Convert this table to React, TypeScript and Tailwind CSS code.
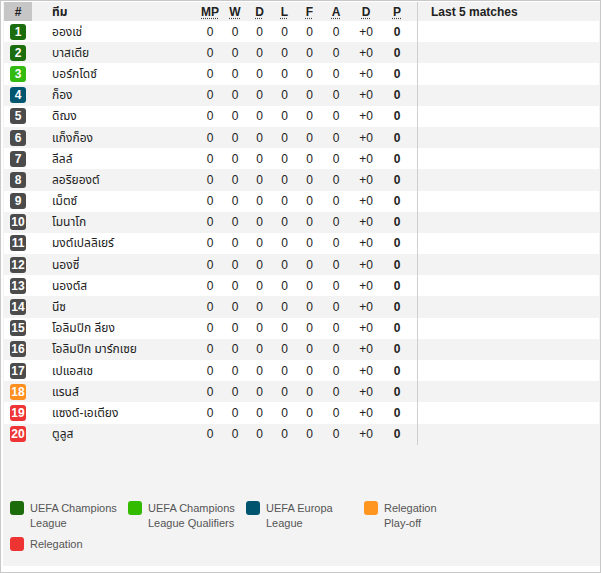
const teams = [
  "อองเช่",
  "บาสเตีย",
  "บอร์กโดซ์",
  "ก็อง",
  "ดิฌง",
  "แก็งก็อง",
  "ลีลล์",
  "ลอริยองต์",
  "เม็ตซ์",
  "โมนาโก",
  "มงต์เปลลิเยร์",
  "นองซี่",
  "นองต์ส",
  "นีซ",
  "โอลิมปิก ลียง",
  "โอลิมปิก มาร์กเซย",
  "เปแอสเช",
  "แรนส์",
  "แซงต์-เอเตียง",
  "ตูลูส",
];

function badgeColor(pos: number) {
  if (pos <= 2) return "bg-[#1b6d0d]";
  if (pos === 3) return "bg-[#33bb11]";
  if (pos === 4) return "bg-[#01566f]";
  if (pos === 18) return "bg-[#ff9020]";
  if (pos >= 19) return "bg-[#ee3434]";
  return "bg-[#4b4b4b]";
}

const cols =
  "grid grid-cols-[28px_165px_26px_24px_25px_25px_25px_28px_32px_30px_5px_1fr] items-center";

const legend = [
  { color: "bg-[#1c6c0c]", lines: ["UEFA Champions", "League"] },
  { color: "bg-[#33bb00]", lines: ["UEFA Champions", "League Qualifiers"] },
  { color: "bg-[#00546e]", lines: ["UEFA Europa", "League"] },
  { color: "bg-[#ff951f]", lines: ["Relegation", "Play-off"] },
  { color: "bg-[#ee3333]", lines: ["Relegation"] },
];

function Abbr({ children }: { children: string }) {
  return (
    <span className="underline decoration-dotted decoration-[#444] underline-offset-2">
      {children}
    </span>
  );
}

export default function App() {
  return (
    <div className="w-[601px] h-[573px] border border-[#c8c8c8] bg-white pl-[2px] pt-[1px] pb-[6px] font-['Liberation_Sans','Noto_Sans_Thai','DejaVu_Sans',sans-serif] text-[12px] text-[#222]">
      <div className="h-full bg-[#f3f3f3] px-[1px]">
        <div className={`${cols} h-[19px] bg-[#f2f2f2] font-bold text-center`}>
          <div className="h-full bg-[#c6c6c6] flex items-center justify-center">#</div>
          <div className="text-left pl-5">ทีม</div>
          <div><Abbr>MP</Abbr></div>
          <div><Abbr>W</Abbr></div>
          <div><Abbr>D</Abbr></div>
          <div><Abbr>L</Abbr></div>
          <div><Abbr>F</Abbr></div>
          <div><Abbr>A</Abbr></div>
          <div><Abbr>D</Abbr></div>
          <div><Abbr>P</Abbr></div>
          <div />
          <div className="h-full border-l border-[#cfcfcf] text-left pl-[13px] flex items-center">
            Last 5 matches
          </div>
        </div>

        {teams.map((name, i) => {
          const pos = i + 1;
          return (
            <div
              key={pos}
              className={`${cols} h-[21.2px] text-center ${
                pos % 2 === 1 ? "bg-white" : "bg-[#f3f3f3]"
              }`}
            >
              <div className="flex justify-center">
                <span
                  className={`${badgeColor(pos)} w-4 h-4 rounded-[3px] text-white font-bold flex items-center justify-center leading-none`}
                >
                  {pos}
                </span>
              </div>
              <div className="text-left pl-5 whitespace-nowrap">{name}</div>
              <div>0</div>
              <div>0</div>
              <div>0</div>
              <div>0</div>
              <div>0</div>
              <div>0</div>
              <div>+0</div>
              <div className="font-bold">0</div>
              <div />
              <div className="h-full border-l border-[#cfcfcf]" />
            </div>
          );
        })}

        <div className="mt-[56px] pl-[6px] flex flex-wrap gap-y-[6px] text-[11px] text-[#555] leading-[15px]">
          {legend.map((l) => (
            <div key={l.lines[0] + l.color} className="w-[118px] flex gap-[6px]">
              <span className={`${l.color} w-[14px] h-[14px] rounded-[3px] shrink-0`} />
              <div className="flex flex-col whitespace-nowrap">
                {l.lines.map((t) => (
                  <span key={t}>{t}</span>
                ))}
              </div>
            </div>
          ))}
        </div>
      </div>
    </div>
  );
}
